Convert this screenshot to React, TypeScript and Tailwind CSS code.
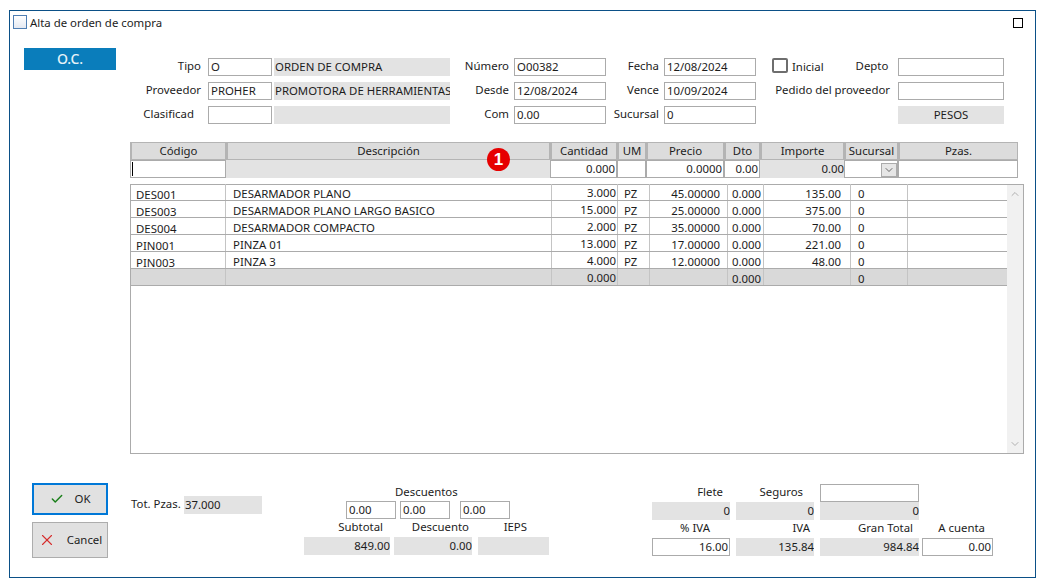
import { Check, ChevronDown, ChevronUp, X } from 'lucide-react';

const line = 'border border-[#ababab]';

function Campo({ valor = '', clase = '' }: { valor?: string; clase?: string }) {
  return <div className={`h-[18px] bg-white ${line} pl-[2px] leading-[16px] whitespace-nowrap overflow-hidden ${clase}`}>{valor}</div>;
}

function Gris({ valor = '', clase = '' }: { valor?: string; clase?: string }) {
  return <div className={`h-[18px] bg-[#e3e3e3] leading-[18px] whitespace-nowrap overflow-hidden ${clase}`}>{valor}</div>;
}

function Etiqueta({ texto, clase = '' }: { texto: string; clase?: string }) {
  return <div className={`h-[18px] leading-[16px] text-right whitespace-nowrap ${clase}`}>{texto}</div>;
}

const encabezados = [
  { t: 'Código', w: 'w-[96px]' },
  { t: 'Descripción', w: 'w-[324px]' },
  { t: 'Cantidad', w: 'w-[67px]' },
  { t: 'UM', w: 'w-[29px]' },
  { t: 'Precio', w: 'w-[78px]' },
  { t: 'Dto', w: 'w-[36px]' },
  { t: 'Importe', w: 'w-[84px]' },
  { t: 'Sucursal', w: 'w-[54px]' },
  { t: 'Pzas.', w: 'w-[120px]' },
];

const filas = [
  ['DES001', 'DESARMADOR PLANO', '3.000', 'PZ', '45.00000', '0.000', '135.00', '0'],
  ['DES003', 'DESARMADOR PLANO LARGO BASICO', '15.000', 'PZ', '25.00000', '0.000', '375.00', '0'],
  ['DES004', 'DESARMADOR COMPACTO', '2.000', 'PZ', '35.00000', '0.000', '70.00', '0'],
  ['PIN001', 'PINZA 01', '13.000', 'PZ', '17.00000', '0.000', '221.00', '0'],
  ['PIN003', 'PINZA 3', '4.000', 'PZ', '12.00000', '0.000', '48.00', '0'],
];

function Fila({ f, total = false }: { f: string[]; total?: boolean }) {
  return (
    <div className={`flex h-[17px] border-b border-[#ababab] leading-[15px] ${total ? 'bg-[#d9d9d9]' : ''}`}>
      <div className="w-[95px] border-r border-[#c4c4c4] pl-[5px] pt-[3px]">{f[0]}</div>
      <div className="w-[326px] border-r border-[#c4c4c4] pl-[7px] pt-[2px]">{f[1]}</div>
      <div className="w-[66px] border-r border-[#c4c4c4] pr-[1px] text-right pt-[1px]">{f[2]}</div>
      <div className="w-[32px] border-r border-[#c4c4c4] pl-[6px] pt-[2px]">{f[3]}</div>
      <div className="w-[78px] border-r border-[#c4c4c4] pr-[7px] text-right pt-[2px]">{f[4]}</div>
      <div className="w-[36px] border-r border-[#c4c4c4] pr-[2px] text-right pt-[2px]">{f[5]}</div>
      <div className="w-[87px] border-r border-[#c4c4c4] pr-[9px] text-right pt-[2px]">{f[6]}</div>
      <div className="w-[57px] border-r border-[#c4c4c4] pl-[7px] pt-[2px]">{f[7]}</div>
      <div className="w-[98px]"></div>
    </div>
  );
}

export default function App() {
  return (
    <div className="w-[1043px] h-[585px] bg-white pt-[10px] pl-[9px] text-[11.4px] text-[#1c1c1c] font-['Noto_Sans',sans-serif] overflow-hidden">
      <div className="relative w-[1027px] h-[568px] border border-[#0b5087]">
        <div className="h-[37px] flex items-start pl-[3px] pt-[4px] pr-[12px]">
          <div className="w-[14px] h-[14px] border border-[#4f7eb3] bg-gradient-to-b from-[#ffffff] to-[#e4e9f2]"></div>
          <span className="ml-[3px] leading-[16px]">Alta de orden de compra</span>
          <div className="ml-auto mt-[3px] w-[10px] h-[10px] border border-black"></div>
        </div>

        <div className="flex items-start">
          <div className="ml-[14px] w-[92px] h-[22px] bg-[#0a7dbb] text-[#e6f2f8] text-center text-[14px] font-medium leading-[21px]">O.C.</div>
          <div className="mt-[10px] grid grid-cols-[92px_64px_2px_176px_64px_92px_58px_92px_142px_106px] gap-y-[6px]">
            <Etiqueta texto="Tipo" clase="pr-[7px]" />
            <Campo valor="O" />
            <div></div>
            <Gris valor="ORDEN DE COMPRA" clase="pl-[1px]" />
            <Etiqueta texto="Número" clase="pr-[5px]" />
            <Campo valor="O00382" />
            <Etiqueta texto="Fecha" clase="pr-[5px]" />
            <Campo valor="12/08/2024" />
            <div className="flex h-[18px]">
              <div className="ml-[16px] w-[16px] h-[15px] rounded-[2px] border-2 border-[#6e6e6e]"></div>
              <span className="ml-[4px] leading-[18px]">Inicial</span>
              <span className="ml-[32px] leading-[16px]">Depto</span>
            </div>
            <Campo />

            <Etiqueta texto="Proveedor" clase="pr-[7px]" />
            <Campo valor="PROHER" />
            <div></div>
            <Gris valor="PROMOTORA DE HERRAMIENTAS" clase="pl-[1px]" />
            <Etiqueta texto="Desde" clase="pr-[5px]" />
            <Campo valor="12/08/2024" />
            <Etiqueta texto="Vence" clase="pr-[5px]" />
            <Campo valor="10/09/2024" />
            <Etiqueta texto="Pedido del proveedor" clase="pr-[8px]" />
            <Campo />

            <Etiqueta texto="Clasificad" clase="pr-[14px]" />
            <Campo />
            <div></div>
            <Gris />
            <Etiqueta texto="Com" clase="pr-[5px]" />
            <Campo valor="0.00" />
            <Etiqueta texto="Sucursal" clase="pr-[5px]" />
            <Campo valor="0" />
            <div></div>
            <Gris valor="PESOS" clase="text-center" />
          </div>
        </div>

        <div className="ml-[120px] mt-[18px] w-[888px]">
          <div className="flex h-[18px] bg-[#dcdcdc]">
            {encabezados.map((e) => (
              <div key={e.t} className={`${e.w} border border-[#b4b4b4] border-l-2 text-center leading-[16px]`}>{e.t}</div>
            ))}
          </div>
          <div className="flex h-[18px] bg-[#e3e3e3] leading-[16px] text-right">
            <div className="w-[96px] bg-white border border-[#ababab] pl-[1px] flex"><div className="w-[1px] h-[14px] mt-[1px] bg-black"></div></div>
            <div className="w-[324px]"></div>
            <div className="w-[67px] bg-white border border-[#ababab] pr-[1px]">0.000</div>
            <div className="w-[29px] bg-white border border-[#ababab]"></div>
            <div className="w-[78px] bg-white border border-[#ababab] pr-[1px]">0.0000</div>
            <div className="w-[36px] bg-white border border-[#ababab] pr-[1px]">0.00</div>
            <div className="w-[84px] leading-[18px]">0.00</div>
            <div className="w-[54px] bg-white border border-[#ababab] flex justify-end items-end">
              <div className="w-[16px] h-[14px] bg-[#e6e6e6] border border-[#ababab] flex items-center justify-center"><ChevronDown size={12} strokeWidth={1.25} /></div>
            </div>
            <div className="w-[120px] bg-white border border-[#ababab]"></div>
          </div>
        </div>

        <div className="ml-[120px] mt-[6px] w-[894px] h-[270px] border border-[#ababab] flex">
          <div className="w-[876px] -mt-[1px]">
            {filas.map((f) => <Fila key={f[0]} f={f} />)}
            <Fila f={['', '', '0.000', '', '', '0.000', '', '0']} total />
          </div>
          <div className="w-[16px] ml-auto bg-[#f1f1f1] flex flex-col justify-between items-center text-[#b0b0b0] py-[3px]">
            <ChevronUp size={12} />
            <ChevronDown size={12} />
          </div>
        </div>

        <div className="flex mt-[29px] items-start">
          <div className="ml-[22px] w-[76px]">
            <div className="h-[32px] bg-[#e1e1e1] border-2 border-[#0078d7] flex items-center justify-center gap-[11px]">
              <Check size={14} strokeWidth={2.5} className="text-[#1a7f1a]" />
              <span>OK</span>
            </div>
            <div className="mt-[7px] h-[36px] bg-[#e1e1e1] border border-[#adadad] flex items-center justify-center gap-[11px]">
              <X size={18} strokeWidth={1.5} className="text-[#d62d2d]" />
              <span>Cancel</span>
            </div>
          </div>

          <div className="ml-[23px] mt-[13px] flex">
            <div className="w-[53px] h-[18px] leading-[16px] whitespace-nowrap">Tot. Pzas.</div>
            <Gris valor="37.000" clase="w-[78px] pl-[1px]" />
          </div>

          <div className="ml-[42px] w-[245px]">
            <div className="h-[18px] pl-[91px] leading-[17px]">Descuentos</div>
            <div className="flex h-[18px] pl-[42px]">
              <Campo valor="0.00" clase="w-[50px]" />
              <Campo valor="0.00" clase="w-[50px] ml-[4px]" />
              <Campo valor="0.00" clase="w-[50px] ml-[10px]" />
            </div>
            <div className="flex h-[18px] leading-[16px] text-right">
              <div className="w-[79px]">Subtotal</div>
              <div className="w-[86px]">Descuento</div>
              <div className="w-[58px]">IEPS</div>
            </div>
            <div className="flex text-right">
              <Gris valor="849.00" clase="w-[86px]" />
              <Gris valor="0.00" clase="w-[78px] ml-[4px]" />
              <Gris clase="w-[71px] ml-[6px]" />
            </div>
          </div>

          <div className="ml-[103px] w-[341px] mt-[1px]">
            <div className="flex h-[18px] leading-[16px] text-right">
              <div className="w-[71px]">Flete</div>
              <div className="w-[80px]">Seguros</div>
              <Campo clase="w-[99px] ml-[17px]" />
            </div>
            <div className="flex text-right">
              <Gris valor="0" clase="w-[78px]" />
              <Gris valor="0" clase="w-[78px] ml-[6px]" />
              <Gris valor="0" clase="w-[99px] ml-[6px]" />
            </div>
            <div className="flex h-[18px] leading-[16px] text-right">
              <div className="w-[58px]">% IVA</div>
              <div className="w-[100px]">IVA</div>
              <div className="w-[103px]">Gran Total</div>
              <div className="w-[72px]">A cuenta</div>
            </div>
            <div className="flex text-right">
              <Campo valor="16.00" clase="w-[78px] pr-[1px]" />
              <Gris valor="135.84" clase="w-[78px] ml-[6px]" />
              <Gris valor="984.84" clase="w-[99px] ml-[6px]" />
              <Campo valor="0.00" clase="w-[71px] ml-[3px] pr-[1px]" />
            </div>
          </div>
        </div>

        <div className="absolute left-[477px] top-[137px] w-[23px] h-[23px] rounded-full bg-[#e60000] text-white text-center font-['Liberation_Sans',sans-serif] font-bold text-[17px] leading-[23px]">1</div>
      </div>
    </div>
  );
}
